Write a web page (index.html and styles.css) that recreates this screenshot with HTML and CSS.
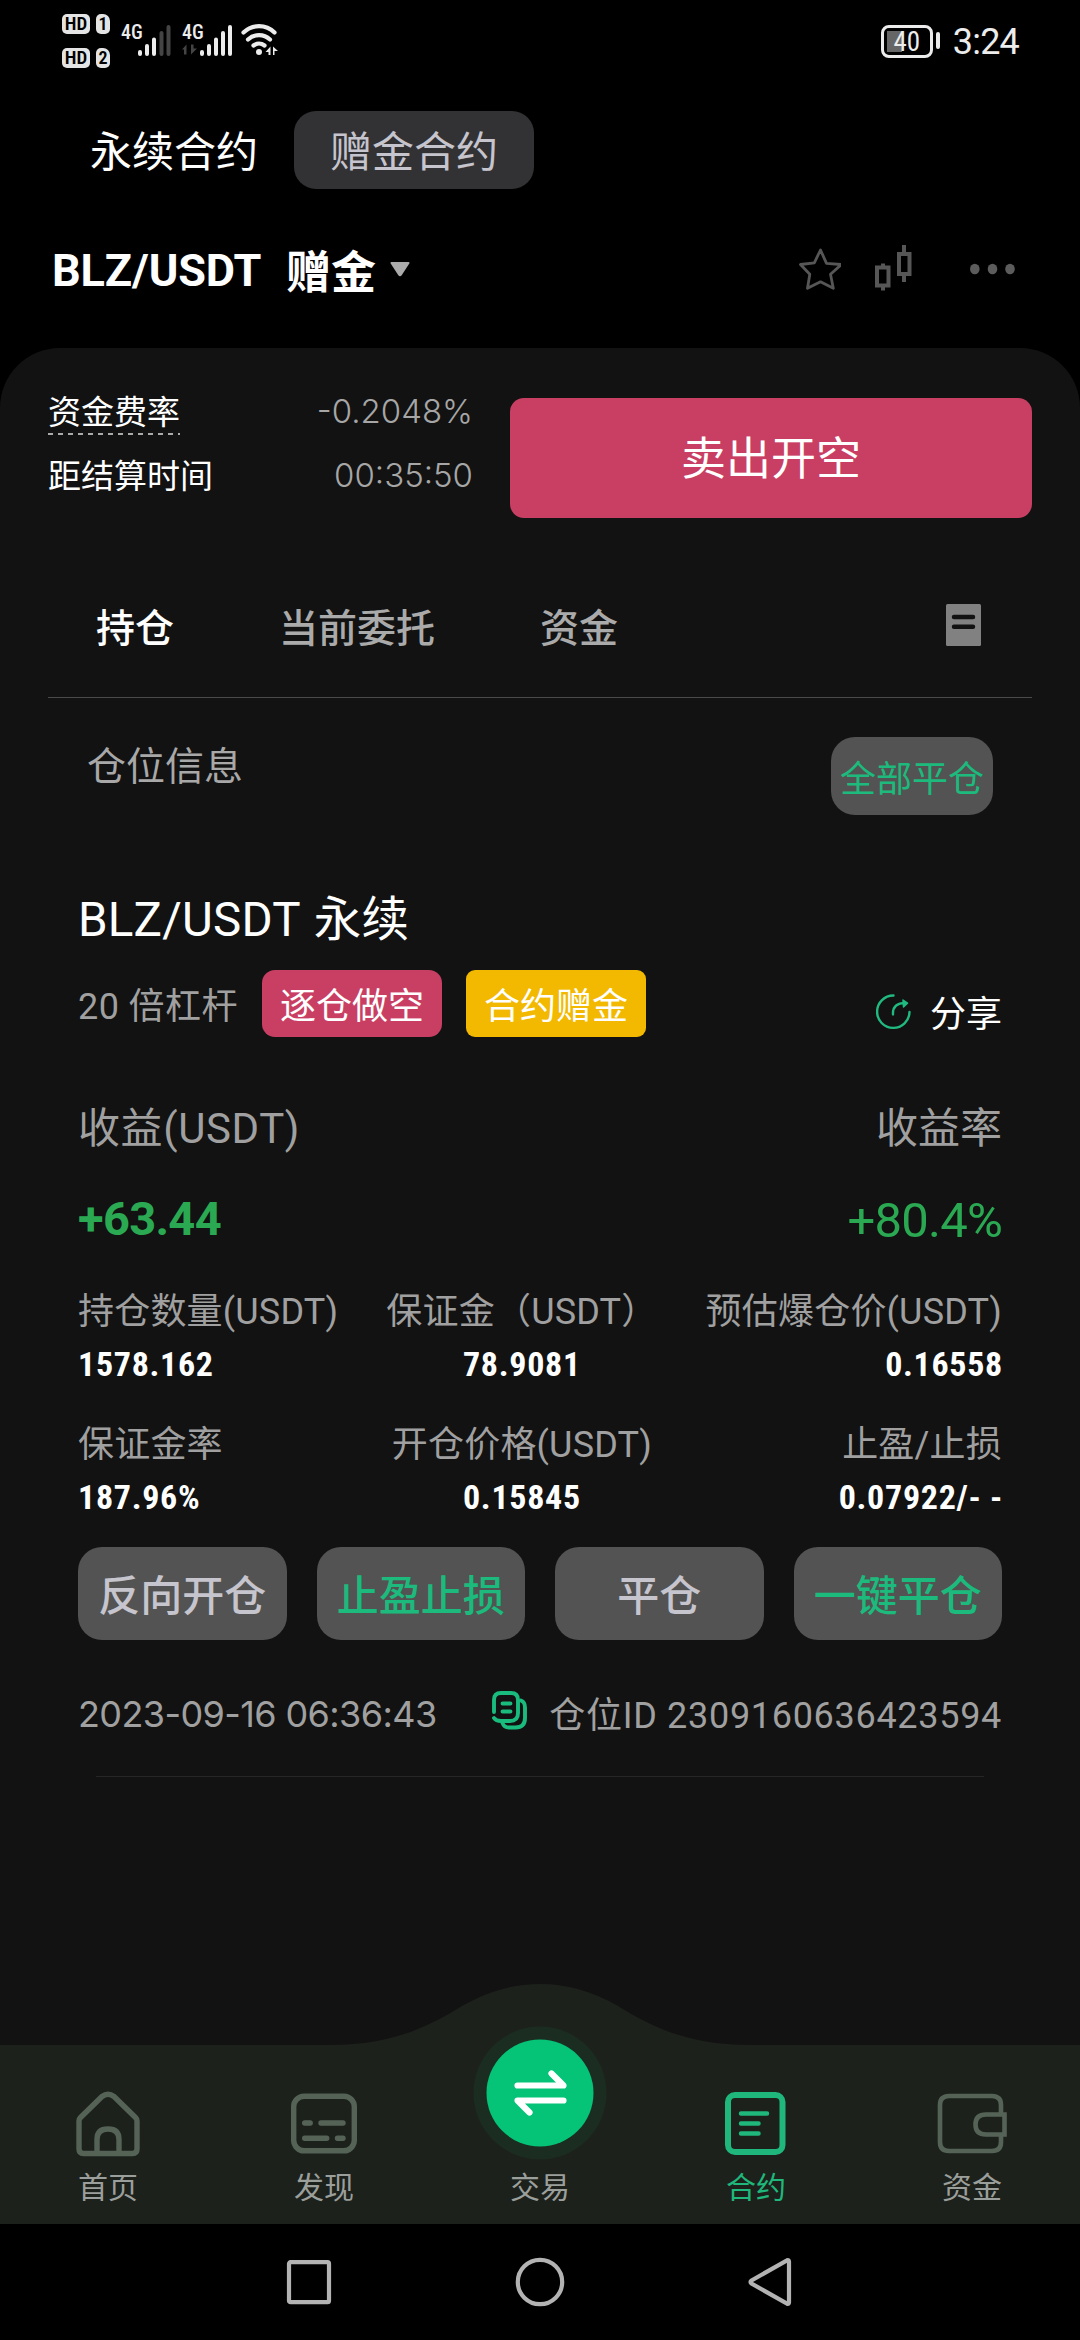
FILE: index.html
```html
<!DOCTYPE html>
<html lang="zh-CN">
<head>
<meta charset="utf-8">
<title>赠金合约</title>
<link rel="stylesheet" href="styles.css">
</head>
<body>
<div class="screen">
  <header class="status">
    <div class="sims">
      <div class="sim"><span class="hd">HD</span><span class="card">1</span></div>
      <div class="sim"><span class="hd">HD</span><span class="card">2</span></div>
    </div>
    <div class="signal">
      <span class="gen">4G</span>
      <svg class="bars" width="50" height="32" viewBox="0 0 50 32" stroke-width="4" stroke-linecap="round">
        <path stroke="#ececec" d="M19 28v2M26 22v8M33 15.500v14.500"/>
        <path stroke="#444" d="M40.500 9v21M47.500 3v27"/>
      </svg>
    </div>
    <div class="signal">
      <span class="gen">4G</span>
      <svg class="bars" width="52" height="32" viewBox="0 0 52 32" stroke-width="4" stroke-linecap="round">
        <path fill="#444" d="M4.500 20.500v10h-2.500v-5h-2zM9 20.500v10l6-6h-3.500v-4z"/>
        <path stroke="#ececec" d="M20 28v2M27 22v8M34 15.500v14.500M41 9v21M48 3v27"/>
      </svg>
    </div>
    <svg class="wifi" width="38" height="34" viewBox="0 0 38 34" fill="none" stroke="#ececec" stroke-width="4.200" stroke-linecap="round">
      <path d="M2.500 9.500a22 22 0 0 1 31 0M7 16.500a16 16 0 0 1 22 0M12.500 22.500a9 9 0 0 1 11 0"/>
      <circle cx="18" cy="29" r="3" fill="#ececec" stroke="none"/>
      <path fill="#ececec" stroke="none" d="M29.500 23.500v8.500h-2v-3h-3zM32 23.500l5 4.500-3.500 0v4h-1.500z"/>
    </svg>
    <div class="battery"><span class="level">40</span></div>
    <i class="cap"></i>
    <span class="clock">3:24</span>
  </header>

  <nav class="modes">
    <span class="mode">永续合约</span>
    <span class="mode mode-on">赠金合约</span>
  </nav>

  <div class="pair">
    <span class="pair-name">BLZ/USDT</span>
    <span class="pair-kind">赠金</span>
    <svg class="caret" width="20" height="15" viewBox="0 0 20 15"><path fill="#ababab" d="M1.500 0h17q1.500 0 .8 1.500l-7.600 11.800q-1.700 2-3.400 0L.7 1.500Q0 0 1.500 0z"/></svg>
    <svg class="star" width="42" height="44" viewBox="0 0 42 44" fill="none" stroke="#565656" stroke-width="2.800" stroke-linejoin="round"><path d="M21.500 3l6 13.300 14.800 1.200-10.800 9.800 2.800 14-12.800-6.500-13 6.500 2.300-14L1.500 17.500l13.800-1.700z"/></svg>
    <svg class="candles" width="37" height="47" viewBox="0 0 37 47" fill="none" stroke="#565656" stroke-width="4"><path d="M2 22.500h11.500v18H2zM24 9h10.500v20H24zM8 18.500v3M8 41.500v4M29 0v8M29 30v7"/></svg>
    <svg class="more" width="45" height="12" viewBox="0 0 45 12" fill="#5c5c5c"><ellipse cx="4.800" cy="6" rx="4.800" ry="5.300"/><ellipse cx="22.500" cy="6" rx="4.800" ry="5.300"/><ellipse cx="40" cy="6" rx="4.800" ry="5.300"/></svg>
  </div>

  <main class="panel">
    <section class="funding">
      <dl class="rates">
        <div class="rate"><dt><span class="dashed">资金费率</span></dt><dd>-0.2048%</dd></div>
        <div class="rate"><dt>距结算时间</dt><dd>00:35:50</dd></div>
      </dl>
      <button class="sell">卖出开空</button>
    </section>

    <nav class="tabs">
      <span class="tab tab-on">持仓</span>
      <span class="tab">当前委托</span>
      <span class="tab">资金</span>
      <svg class="orders" width="35" height="42" viewBox="0 0 35 42"><rect width="35" height="42" rx="1.500" fill="#818181"/><path stroke="#121212" stroke-width="4.500" stroke-linecap="round" d="M8 13h19M8 22.700h19"/></svg>
    </nav>

    <div class="info">
      <h2 class="info-title">仓位信息</h2>
      <button class="close-all">全部平仓</button>
    </div>

    <article class="position">
      <h3 class="name">BLZ/USDT 永续</h3>
      <div class="tags">
        <span class="lever">20 倍杠杆</span>
        <span class="tag tag-short">逐仓做空</span>
        <span class="tag tag-bonus">合约赠金</span>
        <span class="share">
          <svg width="36" height="36" viewBox="0 0 36 36" fill="none" stroke="#20ba80" stroke-width="2.400" stroke-linecap="round" stroke-linejoin="round"><path d="M17.500 1.500A16.200 16.200 0 1 0 33.500 18M17 20.500c-.5-8 4-11.500 12.500-11.500"/><path fill="#20ba80" stroke-width="1.500" d="M27 6l4.500 3.200L27.500 13z"/></svg>
          分享
        </span>
      </div>
      <div class="row profit-labels"><span>收益(USDT)</span><span>收益率</span></div>
      <div class="row profit"><span class="pnl">+63.44</span><span class="roi">+80.4%</span></div>
      <div class="stats">
        <div class="stat"><span class="label">持仓数量(USDT)</span><b class="value">1578.162</b></div>
        <div class="stat mid"><span class="label">保证金（USDT）</span><b class="value">78.9081</b></div>
        <div class="stat end"><span class="label">预估爆仓价(USDT)</span><b class="value">0.16558</b></div>
        <div class="stat"><span class="label">保证金率</span><b class="value">187.96%</b></div>
        <div class="stat mid"><span class="label">开仓价格(USDT)</span><b class="value">0.15845</b></div>
        <div class="stat end"><span class="label">止盈/止损</span><b class="value">0.07922/- -</b></div>
      </div>
      <div class="actions">
        <button class="action">反向开仓</button>
        <button class="action go">止盈止损</button>
        <button class="action">平仓</button>
        <button class="action go">一键平仓</button>
      </div>
      <div class="meta">
        <time>2023-09-16 06:36:43</time>
        <svg class="copy" width="35" height="39" viewBox="0 0 35 39" fill="none" stroke="#1abc7e" stroke-width="3.900" stroke-linecap="round" stroke-linejoin="round"><path d="M2 21V9q0-7 7-7h10q7 0 7 7v13q0 8-8 8h-9q-5 0-7-3"/><path d="M29 9.500q4 1.500 4 7V27q0 9.500-9.500 9.500H17q-5 0-6.500-4.500"/><path d="M10.500 12.500h8M10.500 20.500h8"/></svg>
        <span class="pid">仓位ID 2309160636423594</span>
      </div>
    </article>
  </main>

  <footer class="dock">
    <svg class="dock-shape" width="1080" height="240" viewBox="0 0 1080 240"><path fill="#1d211c" d="M0 61H330C392 61 428 43 462 22 486 8 512 0 540 0S594 8 618 22C652 43 688 61 750 61H1080V240H0z"/></svg>
    <a class="item">
      <svg width="66" height="66" viewBox="0 0 66 66" fill="none" stroke="#556357" stroke-width="5.400" stroke-linejoin="round"><path d="M4 30q0-2 1.500-3.500L27 5.500q6-4.500 12 0L60.500 26.500Q62 28 62 30v28q0 4.500-4.500 4.500h-49Q4 62.500 4 58z"/><path d="M22 62V48.500q0-10.500 11-10.500t11 10.500V62"/></svg>
      <span>首页</span>
    </a>
    <a class="item">
      <svg width="66" height="66" viewBox="0 0 66 66" fill="none" stroke="#556357" stroke-width="5.400" stroke-linecap="round"><rect x="2.700" y="5.200" width="60.600" height="54.600" rx="10.500"/><path d="M13.700 32h5.500M30 32h22M13.700 47.300h22M46.500 47.300h5.500"/></svg>
      <span>发现</span>
    </a>
    <a class="item">
      <svg class="swap" width="134" height="134" viewBox="0 0 134 134"><circle cx="67" cy="67" r="66.500" fill="#1b2c20"/><circle cx="67" cy="67" r="53.500" fill="#05c377"/><path fill="none" stroke="#fff" stroke-width="6.200" stroke-linecap="round" stroke-linejoin="round" d="M44.500 59.500H90.500L78.500 47.500M90.500 74.500H44.500L56.500 86.500"/></svg>
      <span>交易</span>
    </a>
    <a class="item on">
      <svg width="66" height="66" viewBox="0 0 66 66" fill="none" stroke="#1fb77b" stroke-width="6" stroke-linecap="round"><rect x="5" y="4" width="54.500" height="57" rx="7"/><path stroke-width="4.500" d="M18 22.500h26M18 32.500h17.500M18 42.500h17.500"/></svg>
      <span>合约</span>
    </a>
    <a class="item">
      <svg class="wallet" width="70" height="66" viewBox="0 0 70 66" fill="none" stroke="#556357" stroke-width="4.600"><path d="M64 23V14q0-9-9-9H12q-9 0-9 9v37q0 9 9 9h43q9 0 9-9V44"/><path d="M67.500 23.500H49q-10.500 0-10.500 10T49 43.500H67.500z"/></svg>
      <span>资金</span>
    </a>
  </footer>

  <div class="sysnav">
    <svg width="52" height="52" viewBox="0 0 52 52"><rect x="6" y="6.200" width="40" height="40" rx="1.500"/></svg>
    <svg width="52" height="52" viewBox="0 0 52 52"><circle cx="26" cy="26" r="22.200"/></svg>
    <svg width="52" height="52" viewBox="0 0 52 52"><path d="M6.500 24.500L42 4.300q2-.8 2 1.200v41q0 2-2 1.200L6.500 27.500q-2-1.500 0-3z"/></svg>
  </div>
</div>
</body>
</html>
```
FILE: styles.css
```css
* { box-sizing: border-box; }

body {
  margin: 0;
  background: #000;
  color: #fff;
  font-family: Roboto, "Noto Sans CJK SC", sans-serif;
  font-size: 36px;
}

h2, h3, dl, dd, button { margin: 0; }
h2, h3 { font-weight: 400; }
button { border: 0; padding: 0; color: inherit; font: inherit; }
svg { display: block; flex: none; }

.screen {
  width: 1080px;
  height: 2340px;
  display: flex;
  flex-direction: column;
  overflow: hidden;
  white-space: nowrap;
}

/* status bar */
.status {
  height: 84px;
  padding: 14px 61px 0 62px;
  display: flex;
  align-items: flex-start;
  color: #ececec;
}
.sims { display: flex; flex-direction: column; gap: 14px; margin-right: 11px; }
.sim { display: flex; gap: 6px; }
.hd, .card {
  height: 20px;
  background: #e4e4e4;
  color: #000;
  border-radius: 5px;
  font-weight: 600;
  font-stretch: 85%;
  font-size: 19px;
  line-height: 20px;
  text-align: center;
}
.hd { width: 28px; }
.card { width: 14px; border-top-right-radius: 7px; font-size: 18px; }
.signal { width: 61px; height: 42px; position: relative; }
.gen { position: absolute; left: 0; top: 10px; font-size: 20px; line-height: 16px; font-weight: 500; font-stretch: 75%; }
.bars { margin-top: 10px; }
.wifi { margin: 9px 0 0 -2px; }
.battery {
  width: 52px;
  height: 33px;
  margin: 11px 3px 0 auto;
  border: 3px solid #ececec;
  border-radius: 8px;
  padding: 3px;
  background: linear-gradient(#666, #666) 3px 3px / 15px 21px no-repeat;
}
.level { display: block; font-size: 27px; line-height: 22px; text-align: center; font-stretch: 85%; }
.cap { width: 4px; height: 17px; margin: 18px 13px 0 0; border-radius: 2px; background: #ececec; }
.clock { font-size: 36px; line-height: 57px; letter-spacing: -.8px; }

/* product switch */
.modes { height: 132px; padding: 27px 54px 0; display: flex; align-items: flex-start; }
.mode { width: 240px; height: 78px; border-radius: 22px; font-size: 42px; line-height: 83px; text-align: center; }
.mode-on { background: #323235; color: #c6c4cc; }

/* pair heading */
.pair { height: 132px; padding: 0 65px 27px 52px; display: flex; align-items: center; }
.pair-name { width: 234px; font-size: 45px; font-weight: 700; letter-spacing: -.1px; padding-top: 3px; }
.pair-kind { width: 104px; font-size: 45px; font-weight: 700; padding-top: 1px; }
.caret { margin-top: 2px; }
.star { margin-left: auto; }
.candles { margin: 0 58px 0 34px; }

/* main panel */
.panel { flex: none; height: 1876px; background: #121212; border-radius: 60px 60px 0 0; padding: 50px 48px 0; }
.funding { display: flex; justify-content: space-between; height: 120px; }
.rates { width: 425px; font-size: 33px; }
.rate { height: 64px; line-height: 30px; display: flex; justify-content: space-between; }
.rate dd { font-family: Inter, sans-serif; font-weight: 300; color: #a6a6a6; line-height: 27px; }
.dashed { display: block; height: 37px; background: repeating-linear-gradient(90deg, #aaa 0 5px, transparent 5px 10px) 0 100% / 100% 2px no-repeat; }
.sell { width: 522px; height: 120px; border-radius: 14px; background: #c93f63; font-size: 45px; padding-bottom: 5px; }

.tabs { height: 180px; border-bottom: 1px solid #4a4a4a; padding: 35px 51px 0 48px; display: flex; align-items: center; font-size: 39px; font-weight: 500; color: #aaa; }
.tab { margin-right: 105px; padding-bottom: 1px; }
.tab-on { color: #fff; }
.orders { margin-left: auto; }

.info { display: flex; justify-content: space-between; padding: 39px 39px 0; height: 186px; }
.info-title { font-size: 39px; line-height: 60px; color: #a8a8a8; }
.close-all { width: 162px; height: 78px; border-radius: 24px; background: #535353; color: #1cba7c; }

.position { padding: 0 30px; }
.name { font-size: 47.500px; line-height: 72px; letter-spacing: .2px; word-spacing: 2px; padding-bottom: 14px; }
.tags { display: flex; height: 67px; line-height: 74px; }
.lever { width: 184px; color: #a0a0a0; letter-spacing: .4px; }
.tag { width: 180px; height: 67px; margin-right: 24px; text-align: center; }
.tag-short { border-radius: 13px; background: #c93f63; }
.tag-bonus { border-radius: 9px; background: #f2b900; }
.share { margin-left: auto; height: 90px; display: flex; align-items: center; gap: 18px; line-height: 90px; }
.share svg { margin-bottom: 6px; }
.row { display: flex; justify-content: space-between; }
.profit-labels { font-size: 42px; line-height: 60px; padding-top: 62px; color: #a0a0a0; }
.profit-labels span:first-child { letter-spacing: .6px; }
.profit { line-height: 60px; height: 92px; padding-top: 32px; color: #2aa952; }
.pnl { font-size: 47px; font-weight: 700; letter-spacing: -.7px; line-height: 56px; }
.roi { font-size: 49px; letter-spacing: -.8px; }
.stats { display: grid; grid-template-columns: auto auto auto; justify-content: space-between; row-gap: 27px; padding-top: 33px; }
.stat { display: flex; flex-direction: column; height: 106px; }
.label { color: #a0a0a0; line-height: 56px; letter-spacing: .2px; }
.value { font-size: 34px; line-height: 48px; font-stretch: 84%; letter-spacing: .7px; }
.mid { align-items: center; }
.end { align-items: flex-end; }
.end .value { margin-right: -1px; }
.actions { display: grid; grid-template-columns: repeat(4, 1fr); gap: 30px; padding-top: 24px; }
.action { height: 93px; border-radius: 24px; background: #535353; color: #c6c4cc; font-size: 42px; font-weight: 500; line-height: 99px; }
.go { color: #1cba7c; }
.meta { display: flex; align-items: center; height: 137px; padding-top: 7px; border-bottom: 1px solid #262626; margin: 0 18px; color: #a0a0a0; }
.meta time { margin-left: -18px; width: 414px; font-family: Inter, sans-serif; letter-spacing: -.6px; padding-top: 4px; }
.copy { margin-bottom: 2px; }
.pid { margin: 0 -18px 0 auto; letter-spacing: .7px; }

/* bottom dock */
.dock { flex: none; position: relative; height: 179px; margin-top: -179px; display: grid; grid-template-columns: repeat(5, 216px); }
.dock-shape { position: absolute; left: 0; bottom: 0; }
.item { position: relative; display: flex; flex-direction: column; align-items: center; justify-content: flex-end; gap: 9px; padding-bottom: 14px; font-size: 30px; line-height: 44px; color: #9b9f9b; }
.item.on { color: #1fb77b; }
.item .swap { margin: -24px 0 -3px; }

/* system navigation */
.sysnav { height: 116px; display: flex; justify-content: center; align-items: center; gap: 179px; }
.sysnav svg { fill: none; stroke: #b3b3b3; stroke-width: 4.200; }
```
